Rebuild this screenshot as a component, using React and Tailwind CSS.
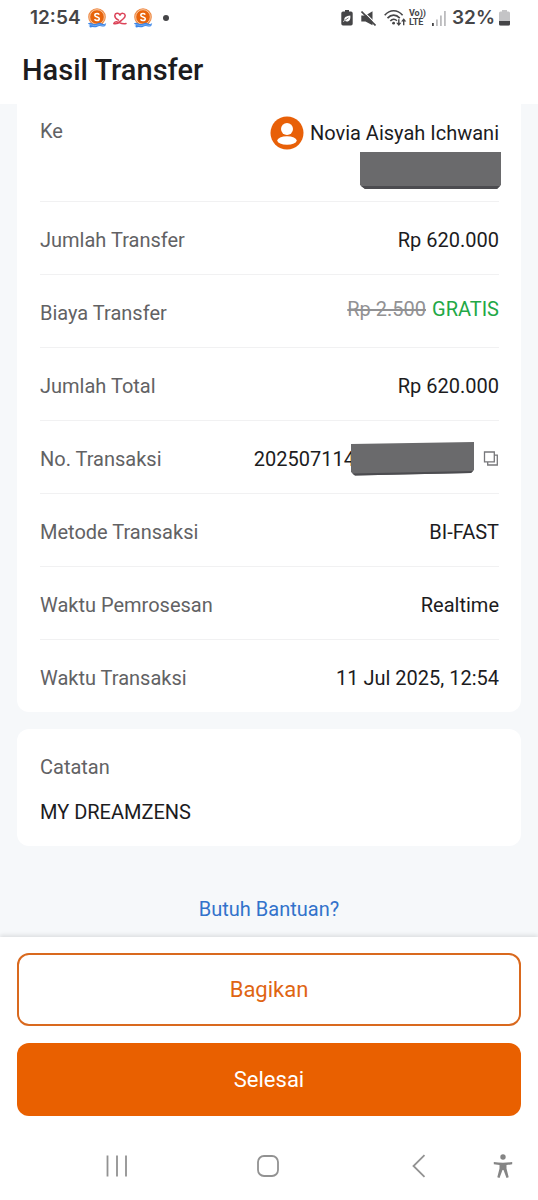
import React from 'react';

function CoinIcon() {
  return (
    <svg viewBox="0 0 20 20" className="size-5" aria-hidden="true">
      <circle cx="10" cy="9" r="8.8" fill="#ee8a45" />
      <circle cx="10" cy="9" r="7.3" fill="#e8640c" stroke="#fbd9bd" strokeWidth="0.8" />
      <path d="M12.3 6.6C11.7 5.8 10.9 5.500 10 5.500c-1.300 0-2.200.7-2.200 1.700 0 2.300 4.500 1.200 4.500 3.500 0 1.100-1 1.800-2.300 1.800-1 0-1.900-.4-2.500-1.200" fill="none" stroke="#fff" strokeWidth="1.500" />
      <path d="M.8 15.400q2.200-1.300 4.600 0t4.800 0 4.800 0 4.200-.3l-1 2.800q-2 1.200-4 .4t-4 .4-4.300.2l-2.900.5-.8-1.600 1-.7Z" fill="#3d86e6" />
      <path d="M1.300 17.200q2.200-1 4.300 0t4.400 0 4.300 0 3.700-.5" fill="none" stroke="#a9cdfa" strokeWidth="0.500" />
    </svg>
  );
}

function RibbonHeartIcon() {
  return (
    <svg viewBox="0 0 14 13" className="h-[13px] w-3.5" fill="none" stroke="#dc4459" strokeWidth="1.500" strokeLinecap="round" strokeLinejoin="round" aria-hidden="true">
      <path d="M1 11.600C4 12.500 6 10.800 8.200 8.600c2-1.900 4.200-2.800 4-5C11.900 1 8.400.400 7 3.200 5.600.400 2.100 1 1.800 3.500c-.1 2.200 1.700 3.500 3.700 4.600" />
      <path d="M1 11.600c0-1.500 1.500-2 3.200-1.700 2 .4 5 2.700 8.800 1.600" />
    </svg>
  );
}

function SaverIcon() {
  return (
    <svg viewBox="0 0 12 16" className="h-4 w-3" aria-hidden="true">
      <path d="M4 0h4v1.500h2A1.700 1.700 0 0 1 11.700 3.200v10.600A1.700 1.700 0 0 1 10 15.500H2A1.700 1.700 0 0 1 .3 13.800V3.200A1.700 1.700 0 0 1 2 1.500h2Z" fill="#454547" />
      <path d="M9.300 5.500c.4 3.700-.7 6-3.300 6-1 0-1.700-.4-2.100-1L2.600 12l-.5-.5 1.300-1.600C2.900 7 5.500 6.200 9.300 5.500Z" fill="#fff" />
      <path d="M3.600 10.500 7.500 7.800" stroke="#454547" strokeWidth="0.700" />
    </svg>
  );
}

function MuteIcon() {
  return (
    <svg viewBox="0 0 15 15" className="size-[15px]" aria-hidden="true">
      <path d="M.3 4.600h4.200L11.500.300v14L4.500 10.400H.3Z" fill="#454547" />
      <path d="M1.500-.4 15.500 13.400" stroke="#fff" strokeWidth="1.300" />
      <path d="M.5.500 14.500 14.500" stroke="#454547" strokeWidth="1.600" />
    </svg>
  );
}

function WifiIcon() {
  return (
    <svg viewBox="0 0 23 18" className="h-[18px] w-[23px]" fill="none" stroke="#454547" strokeWidth="1.600" aria-hidden="true">
      <path d="M.7 6.200C6 .3 13.300.3 18.600 6.200M3.500 9.100c3.700-4 8.600-4 12.300 0M6.300 12c2-2.200 4.700-2.200 6.600-.3" />
      <circle cx="9.600" cy="14.200" r="1.400" fill="#454547" stroke="none" />
      <path d="M14.800 10.300v5M19.700 16.300v-5" strokeWidth="1.400" />
      <path d="M12.200 13.700h5.200l-2.600 3.300ZM17.100 12.500h5.200l-2.600-3.300Z" fill="#454547" stroke="none" />
    </svg>
  );
}

function VolteIcon() {
  return (
    <span className="flex flex-col font-['Roboto',sans-serif] text-[9px] leading-[9px] font-bold text-[#454547]">
      <span>Vo))</span>
      <span>LTE</span>
    </span>
  );
}

function SignalIcon() {
  return (
    <svg viewBox="0 0 14 15" className="h-[15px] w-3.5" aria-hidden="true">
      <path d="M0 12h1.800v3H0Z" fill="#454547" />
      <path d="M4 8.500h1.800V15H4ZM8 4.500h1.800V15H8ZM12 0h1.800v15H12Z" fill="#bcbcbe" />
    </svg>
  );
}

function BatteryIcon() {
  return (
    <svg viewBox="0 0 11 16" className="h-4 w-[11px]" aria-hidden="true">
      <path d="M3 0h5v1.500h1.500A1.500 1.500 0 0 1 11 3v11a1.500 1.500 0 0 1-1.500 1.500h-8A1.500 1.500 0 0 1 0 14V3a1.500 1.500 0 0 1 1.500-1.500H3Z" fill="#c4c4c6" />
      <path d="M0 11h11v3a1.500 1.500 0 0 1-1.500 1.500h-8A1.500 1.500 0 0 1 0 14Z" fill="#454547" />
    </svg>
  );
}

function StatusBar() {
  return (
    <div className="flex h-9 items-center justify-between pr-7 pl-[30px] font-['Inter',sans-serif] text-[#454547]">
      <div className="flex items-center gap-1.5">
        <span className="text-[19px] font-semibold">12:54</span>
        <CoinIcon />
        <RibbonHeartIcon />
        <CoinIcon />
        <span className="ml-1 size-1.5 rounded-full bg-[#454547]" />
      </div>
      <div className="flex items-center gap-1.5">
        <span className="flex items-center gap-2">
          <SaverIcon />
          <MuteIcon />
          <span className="flex items-center gap-0.5">
            <WifiIcon />
            <VolteIcon />
          </span>
        </span>
        <SignalIcon />
        <span className="flex items-center gap-1">
          <span className="text-[19px] font-semibold">32%</span>
          <BatteryIcon />
        </span>
      </div>
    </div>
  );
}

function Row({ label, children }) {
  return (
    <div className="flex min-h-[73px] items-center justify-between border-t border-[#f1f1f2] pt-[3px]">
      <dt className="text-[#626264]">{label}</dt>
      <dd>{children}</dd>
    </div>
  );
}

function AvatarIcon() {
  return (
    <svg viewBox="0 0 34 34" className="size-[34px]" aria-hidden="true">
      <circle cx="17" cy="17" r="16.500" fill="#e86008" />
      <circle cx="17" cy="13" r="6" fill="#fff" />
      <ellipse cx="17" cy="24.500" rx="9.700" ry="4.300" fill="#fff" />
    </svg>
  );
}

export default function App() {
  return (
    <div className="flex min-h-screen flex-col bg-[#f6f8fa] font-['Roboto',sans-serif] text-[20px] leading-6 text-[#1c1c1e]">
      <header className="bg-white">
        <StatusBar />
        <h1 className="flex h-[68px] items-center px-[22px] text-[29px] leading-8 font-medium">Hasil Transfer</h1>
      </header>

      <main className="flex grow flex-col px-[17px]">
        <dl className="rounded-b-xl bg-white pr-[22px] pl-[23px]">
          <div className="flex h-[97px] justify-between">
            <dt className="pt-[15px] text-[#626264]">Ke</dt>
            <dd className="flex flex-col items-end pt-3">
              <span className="flex items-center gap-1.5">
                <AvatarIcon />
                Novia Aisyah Ichwani
              </span>
              <svg viewBox="0 0 141 37" className="-mr-0.5 mt-0.5 h-[37px] w-[141px]" aria-hidden="true">
                <path d="M0 0h141v33l-4 4H5l-5-4Z" fill="#6a6a6c" />
                <path d="M1 34h139l-3 3H5Z" fill="#4c4c50" />
              </svg>
            </dd>
          </div>
          <Row label="Jumlah Transfer">Rp 620.000</Row>
          <Row label="Biaya Transfer">
            <span className="flex gap-1.5 pb-2">
              <s className="text-[#929294]">Rp 2.500</s>
              <span className="text-[#22a846]">GRATIS</span>
            </span>
          </Row>
          <Row label="Jumlah Total">Rp 620.000</Row>
          <Row label="No. Transaksi">
            <span className="flex items-center">
              202507114
              <svg viewBox="0 0 124 34" className="-my-2 -ml-1 h-[34px] w-[124px]" aria-hidden="true">
                <path d="M0 2 123 0v28l-3 3L4 33.500 0 30Z" fill="#6a6a6c" />
                <path d="M1 31.500 122 29l-2 2L4 33.500Z" fill="#4c4c50" />
              </svg>
              <button type="button" aria-label="Salin" className="ml-2">
                <svg viewBox="0 0 16 16" className="size-4" fill="none" stroke="#77777a" strokeWidth="1.300" aria-hidden="true">
                  <path d="M1.500 1h9.800v9.800H1.500ZM11.300 4.200h3v9.800H4.700v-3.200" />
                </svg>
              </button>
            </span>
          </Row>
          <Row label="Metode Transaksi">BI-FAST</Row>
          <Row label="Waktu Pemrosesan">Realtime</Row>
          <Row label="Waktu Transaksi">11 Jul 2025, 12:54</Row>
        </dl>

        <section className="mt-[17px] flex flex-col gap-[21px] rounded-xl bg-white px-[23px] pt-[26px] pb-[22px]">
          <h2 className="text-[#626264]">Catatan</h2>
          <p>MY DREAMZENS</p>
        </section>

        <a href="#bantuan" className="mt-[51px] mb-4 self-center text-[#3272cb]">Butuh Bantuan?</a>
      </main>

      <footer className="bg-white shadow-[0_-2px_4px_rgba(0,0,0,0.10)]">
        <div className="flex flex-col gap-[17px] px-[17px] pt-4 text-[22px]">
          <button type="button" className="h-[73px] rounded-xl border-2 border-[#d9691e] text-[#df6512]">Bagikan</button>
          <button type="button" className="h-[73px] rounded-xl bg-[#e96000] text-white">Selesai</button>
        </div>
        <nav className="flex h-[84px] items-center pt-4 pr-[25px] pl-[105px]" aria-label="Navigasi sistem">
          <div className="flex grow items-center justify-between pr-[62px]">
            <button type="button" aria-label="Aplikasi terbaru">
              <svg viewBox="0 0 24 24" className="size-6" stroke="#929292" strokeWidth="1.800" aria-hidden="true">
                <path d="M2.500 1.500v21M12 1.500v21M21 1.500v21" />
              </svg>
            </button>
            <button type="button" aria-label="Beranda">
              <svg viewBox="0 0 24 24" className="size-6" fill="none" stroke="#929292" strokeWidth="1.800" aria-hidden="true">
                <rect x="2" y="2" width="20" height="20" rx="6" />
              </svg>
            </button>
            <button type="button" aria-label="Kembali">
              <svg viewBox="0 0 24 24" className="size-6" fill="none" stroke="#929292" strokeWidth="1.800" aria-hidden="true">
                <path d="M17.500 1.200 6.500 12l11 10.800" />
              </svg>
            </button>
          </div>
          <button type="button" aria-label="Aksesibilitas">
            <svg viewBox="0 0 20 24" className="h-6 w-5" fill="#858585" aria-hidden="true">
              <circle cx="10" cy="3" r="2.700" />
              <path d="M.8 8q9.200 1.400 18.400 0v2.300l-5.700.8v3.400l2.200 8.700-2.200.8-3-8h-1l-3 8-2.200-.8 2.200-8.700v-3.400L.8 10.300Z" />
            </svg>
          </button>
        </nav>
      </footer>
    </div>
  );
}
